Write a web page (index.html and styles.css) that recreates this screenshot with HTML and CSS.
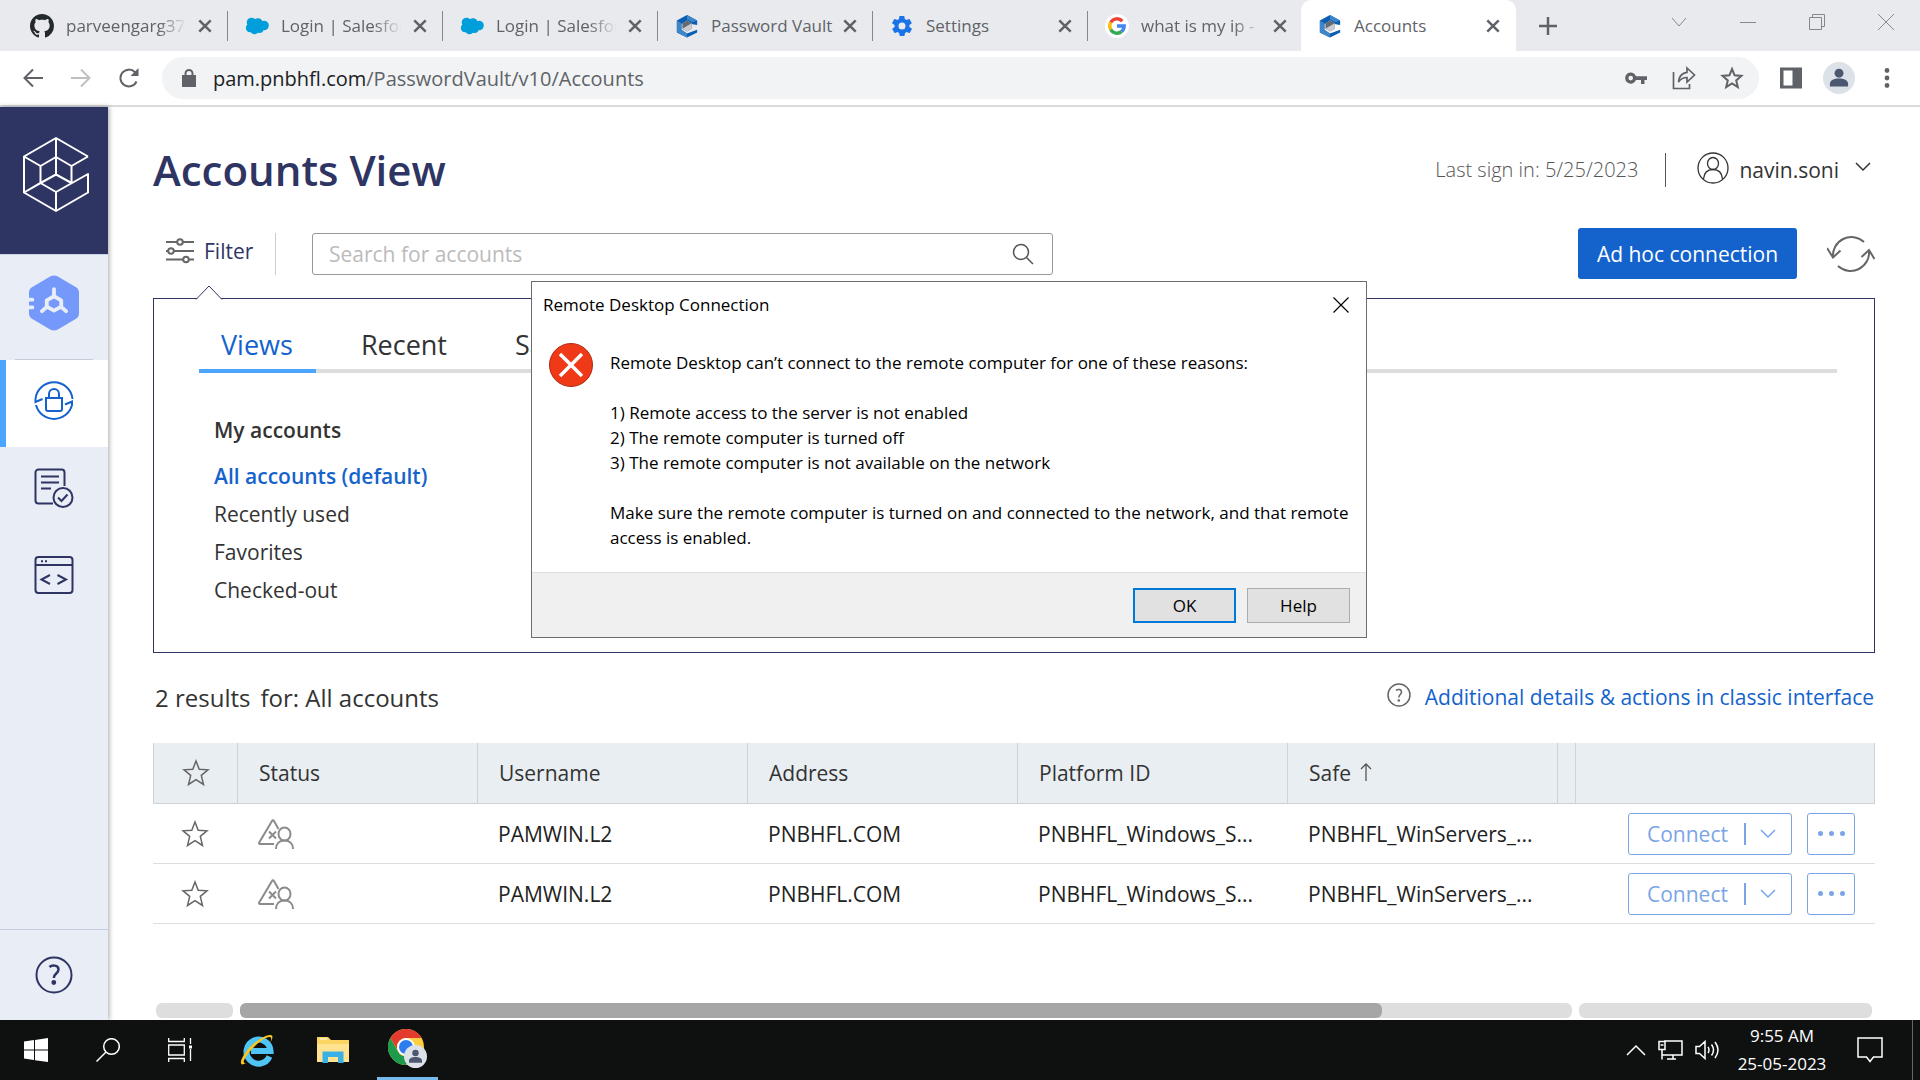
FILE: index.html
```html
<!DOCTYPE html>
<html lang="en">
<head>
<meta charset="utf-8">
<title>Accounts</title>
<link rel="stylesheet" href="styles.css">
</head>
<body>
<svg class="defs" aria-hidden="true">
  <symbol id="x" viewBox="0 0 14 14"><path d="M2 2l10 10M12 2L2 12" fill="none" stroke="#5f6368" stroke-width="2.2"/></symbol>
  <symbol id="cloud" viewBox="0 0 24 24"><g fill="#009edb"><circle cx="6.500" cy="8.500" r="4.800"/><circle cx="13" cy="8.800" r="4.600"/><circle cx="19" cy="11.500" r="4.800"/><circle cx="5" cy="14" r="4.200"/><circle cx="9.500" cy="16" r="4.300"/><circle cx="14.500" cy="15" r="4"/></g></symbol>
  <symbol id="vault" viewBox="0 0 24 26"><path d="M12 1l11 6v5l-5-1-6-4-6 4v6l6 4 11-4v3l-11 5.500L1 20V7z" fill="#0a5fb4"/><path d="M1 7l5 3v7l6 4v4.500L1 20zM12 1l11 6-5 2-6-3z" fill="#3f86c9"/><path d="M12 7l5 3v6l-5 3-5-3v-6z" fill="#666b73"/><path d="M12 13l5-3v6l-5 3-5-3z" fill="#c9ccd1"/></symbol>
  <symbol id="star" viewBox="0 0 28 28"><path d="M14 2l3.200 8.200 8.800.6-6.700 5.600 2.200 9.100L14 20.700l-7.500 4.800 2.200-9.100L2 10.800l8.800-.6z" fill="none" stroke="#666" stroke-width="1.500"/></symbol>
  <symbol id="warn" viewBox="0 0 36 30"><path d="M16 25H2c-.8 0-1.200-.7-.8-1.500L14 2c.5-1 1.500-1 2 0l4.500 8M11 12.500l7 7M18 12.500l-7 7" fill="none" stroke="#8b8b8b" stroke-width="2"/><ellipse cx="26.500" cy="15" rx="6" ry="6.500" fill="none" stroke="#8b8b8b" stroke-width="2"/><path d="M18 30c0-5.500 3.500-8.500 8.500-8.500S35 24.500 35 30" fill="none" stroke="#8b8b8b" stroke-width="2"/></symbol>
  <symbol id="down" viewBox="0 0 16 10"><path d="M1 1l7 7 7-7" fill="none" stroke="currentColor" stroke-width="1.500"/></symbol>
  <symbol id="person" viewBox="0 0 30 30"><circle cx="15" cy="15" r="15" fill="#dde1e8"/><circle cx="15" cy="10.500" r="4.200" fill="#4b5870"/><path d="M6.500 23v-2.500c0-3.500 4-5 8.500-5s8.500 1.500 8.500 5V23z" fill="#4b5870"/></symbol>
</svg>

<header class="browser">
  <div class="tabstrip">
    <div class="tab"><svg class="fav" viewBox="0 0 16 16"><path fill="#24292e" d="M8 0C3.580 0 0 3.580 0 8c0 3.540 2.290 6.530 5.470 7.590.4.070.55-.17.55-.38 0-.19-.01-.82-.01-1.490-2.010.37-2.530-.49-2.690-.94-.09-.23-.48-.94-.82-1.130-.28-.15-.68-.52-.01-.53.63-.01 1.080.58 1.230.82.72 1.210 1.870.87 2.330.66.070-.52.280-.87.510-1.070-1.780-.2-3.640-.89-3.640-3.950 0-.87.310-1.590.82-2.150-.08-.2-.36-1.020.080-2.120 0 0 .67-.21 2.200.82.640-.18 1.320-.27 2-.27s1.360.09 2 .27c1.530-1.040 2.200-.82 2.200-.82.440 1.100.160 1.920.080 2.120.51.560.82 1.270.82 2.150 0 3.070-1.870 3.750-3.650 3.950.29.250.54.730.54 1.480 0 1.070-.01 1.930-.01 2.200 0 .21.150.46.550.38A8.010 8.010 0 0 0 16 8c0-4.420-3.580-8-8-8z"/></svg><span class="tab-title fade">parveengarg37</span><button class="tab-close" aria-label="Close tab"><svg><use href="#x"/></svg></button></div>
    <div class="tab"><svg class="fav"><use href="#cloud"/></svg><span class="tab-title fade">Login | Salesforce</span><button class="tab-close" aria-label="Close tab"><svg><use href="#x"/></svg></button></div>
    <div class="tab"><svg class="fav"><use href="#cloud"/></svg><span class="tab-title fade">Login | Salesforce</span><button class="tab-close" aria-label="Close tab"><svg><use href="#x"/></svg></button></div>
    <div class="tab"><svg class="fav"><use href="#vault"/></svg><span class="tab-title">Password Vault</span><button class="tab-close" aria-label="Close tab"><svg><use href="#x"/></svg></button></div>
    <div class="tab"><svg class="fav" viewBox="0 0 24 24"><path fill="#1a73e8" d="M19.400 13a7.500 7.500 0 0 0 0-2l2.100-1.600c.2-.2.300-.4.100-.7l-2-3.400c-.1-.2-.4-.3-.6-.2l-2.500 1a7.300 7.300 0 0 0-1.700-1l-.4-2.600c0-.3-.2-.5-.5-.5h-4c-.2 0-.4.200-.5.400l-.4 2.700c-.6.200-1.200.6-1.700 1l-2.500-1c-.2-.1-.5 0-.6.200l-2 3.400c-.1.300 0 .5.100.7L4.600 11a8 8 0 0 0 0 2l-2.100 1.600c-.2.200-.3.400-.1.700l2 3.400c.1.200.4.300.6.200l2.500-1c.5.400 1.100.7 1.700 1l.4 2.600c0 .3.200.5.500.5h4c.2 0 .4-.2.500-.4l.4-2.700c.6-.2 1.200-.6 1.700-1l2.500 1c.2.100.5 0 .6-.2l2-3.400c.1-.3 0-.5-.1-.7zM12 15.500a3.500 3.500 0 1 1 0-7 3.500 3.500 0 0 1 0 7z"/></svg><span class="tab-title">Settings</span><button class="tab-close" aria-label="Close tab"><svg><use href="#x"/></svg></button></div>
    <div class="tab"><svg class="fav" viewBox="0 0 24 24"><circle cx="12" cy="12" r="12" fill="#fff"/><g fill="none" stroke-width="3.400"><path d="M17.300 7.100A7.200 7.200 0 0 0 5.700 8.500" stroke="#ea4335"/><path d="M5.700 8.500a7.200 7.200 0 0 0 0 7" stroke="#fbbc05"/><path d="M5.700 15.500a7.200 7.200 0 0 0 11 1.900" stroke="#34a853"/><path d="M16.600 17.500a7.200 7.200 0 0 0 2.600-5.500H12" stroke="#4285f4"/></g></svg><span class="tab-title fade">what is my ip -</span><button class="tab-close" aria-label="Close tab"><svg><use href="#x"/></svg></button></div>
    <div class="tab active"><svg class="fav"><use href="#vault"/></svg><span class="tab-title">Accounts</span><button class="tab-close" aria-label="Close tab"><svg><use href="#x"/></svg></button></div>
    <button class="new-tab" aria-label="New tab"><svg width="20" height="20" viewBox="0 0 20 20"><path d="M10 1v18M1 10h18" stroke="#5f6368" stroke-width="2.500"/></svg></button>
    <div class="window-buttons">
      <button aria-label="Search tabs"><svg viewBox="0 0 16 16"><path d="M1 4l7 8 7-8"/></svg></button>
      <button aria-label="Minimize"><svg viewBox="0 0 16 16"><path d="M0 8.500h16"/></svg></button>
      <button aria-label="Restore"><svg viewBox="0 0 16 16"><path d="M.5 3.500h12v12H.5zM3.500 3.500v-3h12v12h-3"/></svg></button>
      <button aria-label="Close"><svg viewBox="0 0 16 16"><path d="M0 0l16 16M16 0L0 16"/></svg></button>
    </div>
  </div>
  <div class="toolbar">
    <button aria-label="Back"><svg viewBox="0 0 20 20"><path d="M20 10H2M10 1.500L1.500 10l8.500 8.500"/></svg></button>
    <button class="off" aria-label="Forward"><svg viewBox="0 0 20 20"><path d="M0 10h18M10 1.500l8.500 8.500-8.500 8.500"/></svg></button>
    <button aria-label="Reload"><svg viewBox="0 0 20 20"><path d="M17.500 13.500A8.400 8.400 0 1 1 16 4.300l2 2"/><path d="M19.500 0v8h-8z" fill="#5f6368" stroke="none"/></svg></button>
    <div class="omnibox">
      <svg class="lock" viewBox="0 0 14 18"><path d="M1 7h12v10H1z" fill="#5f6368"/><path d="M3.500 8V4.500a3.500 3.500 0 0 1 7 0V8" fill="none" stroke="#5f6368" stroke-width="2"/></svg>
      <div class="url">pam.pnbhfl.com<span>/PasswordVault/v10/Accounts</span></div>
      <button aria-label="Saved passwords"><svg viewBox="0 0 24 24"><path d="M12 10.200A5.600 5.600 0 1 0 12 14h5v4h3.500v-4H23v-3.800zM6.700 14.400a2.300 2.300 0 1 1 0-4.600 2.300 2.300 0 0 1 0 4.600z" fill="#5f6368" stroke="none"/></svg></button>
      <button aria-label="Share"><svg viewBox="0 0 24 24"><path d="M1.500 6v16.500h16V18M15 2l7.500 7-7.500 7v-4.500c-4 0-6.500 1.500-8.500 4.500.5-5.500 3.500-9 8.500-9.700z" stroke-width="1.700"/></svg></button>
      <button aria-label="Bookmark"><svg viewBox="0 0 24 24"><path d="M12 3l2.600 6.300 6.800.6-5.200 4.500 1.600 6.600-5.800-3.600L6.200 21l1.600-6.600-5.200-4.500 6.800-.6z" stroke-width="2"/></svg></button>
    </div>
    <button class="after" aria-label="Side panel"><svg viewBox="0 0 24 24"><path d="M1 1.500h22v21H1zM4.500 4.500v15h9v-15z" fill="#5f6368" fill-rule="evenodd" stroke="none"/></svg></button>
    <button class="avatar" aria-label="Profile"><svg><use href="#person"/></svg></button>
    <button aria-label="Menu"><svg viewBox="0 0 20 20"><g fill="#5f6368" stroke="none"><circle cx="10" cy="2.500" r="2.400"/><circle cx="10" cy="10" r="2.400"/><circle cx="10" cy="17.500" r="2.400"/></g></svg></button>
  </div>
</header>

<div class="app">
  <nav class="sidebar">
    <a class="logo" href="#" aria-label="Home"><svg viewBox="0 0 68 78" fill="none" stroke="#fff" stroke-width="2" stroke-linejoin="round"><path d="M66 20.500L34 2 2 20.500v36L34 75l32-18.500V38L34 56 18.500 47V30L34 21l15.500 9v17L34 38.500 18.500 47 2 56.500M34 2v36M2 20.500L18.500 30M66 20.500L49.500 30M34 56v19"/></svg></a>
    <a class="item hub" href="#" aria-label="Services"><svg viewBox="0 0 52 58"><path d="M22 1.500a8 8 0 0 1 8 0l18 10.500a7 7 0 0 1 4 6.500v21a7 7 0 0 1-4 6.500L30 56.500a8 8 0 0 1-8 0L4 46a7 7 0 0 1-4-6.500v-21A7 7 0 0 1 4 12z" fill="#7599fa"/><g fill="none" stroke="#e8edf6" stroke-width="4" stroke-linecap="round" stroke-linejoin="round"><path d="M26 14.500v7.500l-7.500 4.200v6.600L26 37l7.500-4.200v-6.600L26 22M18.500 33l-5 4.500M33.500 33l5 4.500M-3 25.500h6.500M-3 33.500h6.500"/></g></svg></a>
    <a class="item current" href="#" aria-label="Accounts"><svg viewBox="0 0 40 40" fill="none" stroke="#1463cd" stroke-width="2"><path d="M38.500 18A18.600 18.600 0 0 0 1.500 18v3l7-3M2 24a18.600 18.600 0 0 0 36 0v-3.500L31 23.500M12 17h16v11a2 2 0 0 1-2 2H14a2 2 0 0 1-2-2zM15 16.500V13a5 5 0 0 1 10 0v3.500"/></svg></a>
    <a class="item" href="#" aria-label="Reports"><svg viewBox="0 0 40 40" fill="none" stroke="#2f3563" stroke-width="2"><path d="M19 35.500H4.500a3 3 0 0 1-3-3v-28a3 3 0 0 1 3-3h23a3 3 0 0 1 3 3V18M7 8.500h18M7 14.500h18M7 20.500h10"/><circle cx="29" cy="29.500" r="9.500"/><path d="M24 29.500l3.500 3.500 6-6.500"/></svg></a>
    <a class="item" href="#" aria-label="Applications"><svg viewBox="0 0 40 40" fill="none" stroke="#2f3563" stroke-width="2"><rect x="1.500" y="2" width="37" height="36" rx="3"/><path d="M1.500 10h37M16 20l-8.500 4.500L16 29M23.500 20l8.500 4.500-8.500 4.500M7 6.300h2M11 6.300h2"/></svg></a>
    <a class="item help" href="#" aria-label="Help"><svg viewBox="0 0 40 40" fill="none" stroke="#2f3563" stroke-width="2"><circle cx="20" cy="20" r="17.500"/><path d="M15.500 12c2-2 9-2.500 9 2.500 0 4-4.700 4-4.700 8.500" stroke-width="2.500"/><circle cx="19.800" cy="27.500" r="1.400" fill="#2f3563"/></svg></a>
  </nav>

  <main class="main">
    <div class="page-head">
      <h1>Accounts View</h1>
      <span class="signin">Last sign in: 5/25/2023</span>
      <button class="user"><svg class="user-icon" viewBox="0 0 32 32" fill="none" stroke="#333" stroke-width="1.300"><circle cx="16" cy="16" r="15"/><ellipse cx="16" cy="11.500" rx="5.500" ry="6"/><path d="M6.500 27c.5-6 4-9.500 9.500-9.500s9 3.500 9.500 9.500"/></svg><span>navin.soni</span><svg class="chev"><use href="#down"/></svg></button>
    </div>

    <div class="tools">
      <button class="filter"><svg viewBox="0 0 28 26" fill="#fff" stroke="#666" stroke-width="2"><path d="M0 4h28M0 13h28M0 21.500h28"/><circle cx="14" cy="4" r="2.800"/><circle cx="5" cy="13" r="2.800"/><circle cx="20" cy="21.500" r="2.800"/></svg><span>Filter</span></button>
      <div class="search"><input type="search" placeholder="Search for accounts" aria-label="Search for accounts"><svg viewBox="0 0 22 22" fill="none" stroke="#555" stroke-width="1.500"><circle cx="9" cy="9" r="7.500"/><path d="M14.500 14.500L21 21"/></svg></div>
      <button class="adhoc">Ad hoc connection</button>
      <button class="refresh" aria-label="Refresh"><svg viewBox="0 0 48 40" fill="none" stroke="#666" stroke-width="2"><path d="M37 8A18.500 18.500 0 0 0 6 23.500M0 14l6 9.500 7.500-7M11 32a18.500 18.500 0 0 0 31-15.500M34.500 23l7.500-7 5.500 9"/></svg></button>
    </div>

    <section class="panel">
      <svg class="notch" viewBox="0 0 28 15"><path d="M1 14.500L14 1l13 13.500" fill="#fff" stroke="#2f3563"/></svg>
      <div class="panel-tabs">
        <a class="on" href="#">Views</a><a href="#">Recent</a><a href="#">Saved</a>
      </div>
      <h2>My accounts</h2>
      <ul>
        <li><a class="on" href="#">All accounts (default)</a></li>
        <li><a href="#">Recently used</a></li>
        <li><a href="#">Favorites</a></li>
        <li><a href="#">Checked-out</a></li>
      </ul>
    </section>

    <div class="results">
      <p><span>2 results</span><span>for: All accounts</span></p>
      <a href="#"><svg viewBox="0 0 24 24" fill="none" stroke="#666" stroke-width="1.500"><circle cx="12" cy="12" r="11"/><path d="M9 7.500c1.500-1.500 5.500-1.500 5.500 1.500 0 2.500-2.700 2.700-2.700 5.500"/><circle cx="11.800" cy="17.500" r=".6"/></svg>Additional details &amp; actions in classic interface</a>
    </div>

    <table>
      <colgroup><col class="c-star"><col class="c-status"><col class="c-text"><col class="c-text"><col class="c-text"><col class="c-text"><col class="c-gap"><col></colgroup>
      <thead><tr><th class="star-cell"><svg><use href="#star"/></svg></th><th>Status</th><th>Username</th><th>Address</th><th>Platform ID</th><th>Safe<svg class="sort" viewBox="0 0 12 18"><path d="M6 18V1M1 6l5-5 5 5" fill="none" stroke="#555" stroke-width="1.300"/></svg></th><th></th><th></th></tr></thead>
      <tbody>
        <tr><td class="star-cell"><svg><use href="#star"/></svg></td><td><svg class="warn"><use href="#warn"/></svg></td><td>PAMWIN.L2</td><td>PNBHFL.COM</td><td>PNBHFL_Windows_S...</td><td>PNBHFL_WinServers_...</td><td></td><td><div class="actions"><button class="connect"><span>Connect</span><svg><use href="#down"/></svg></button><button class="more" aria-label="More actions"><i></i><i></i><i></i></button></div></td></tr>
        <tr><td class="star-cell"><svg><use href="#star"/></svg></td><td><svg class="warn"><use href="#warn"/></svg></td><td>PAMWIN.L2</td><td>PNBHFL.COM</td><td>PNBHFL_Windows_S...</td><td>PNBHFL_WinServers_...</td><td></td><td><div class="actions"><button class="connect"><span>Connect</span><svg><use href="#down"/></svg></button><button class="more" aria-label="More actions"><i></i><i></i><i></i></button></div></td></tr>
      </tbody>
    </table>

    <div class="scrollbars"><div class="track s1"></div><div class="track s2"><div class="thumb"></div></div><div class="track s3"></div></div>
  </main>
</div>

<footer class="taskbar">
  <button class="task" aria-label="Start"><svg width="24" height="24" viewBox="0 0 24 24"><path d="M0 3.500l10-1.400v9.400H0zM11 2l13-2v11.500H11zM0 12.500h10V22L0 20.600zM11 12.500h13V24l-13-1.800z" fill="#fff"/></svg></button>
  <button class="task" aria-label="Search"><svg width="24" height="24" viewBox="0 0 24 24" fill="none" stroke="#fff" stroke-width="1.500"><circle cx="15.500" cy="8.500" r="7.800"/><path d="M10 14L.5 23.500"/></svg></button>
  <button class="task" aria-label="Task view"><svg width="24" height="24" viewBox="0 0 24 24" fill="none" stroke="#fff" stroke-width="1.300"><path d="M.7 0v3.500h15.600V0M.7 7h15.600v10H.7zM.7 24v-3.500h15.600V24M22.500 0v6M22.500 11v12"/><path d="M21 7.500h3v3h-3z" fill="#fff" stroke="none"/></svg></button>
  <button class="task" aria-label="Internet Explorer"><svg width="36" height="36" viewBox="0 0 36 36" fill="none"><path d="M30.500 24.500A12 12 0 1 1 31.500 19H12" stroke="#50c4f5" stroke-width="6"/><path d="M7 31c-10 6-4-9 6-18S36-1 33 7c-.5 1.500-1 2.500-2 4 5-11-7-5-15 3S1 32 7 31z" fill="#f9c623"/></svg></button>
  <button class="task" aria-label="File Explorer"><svg width="32" height="28" viewBox="0 0 32 28"><path d="M0 1h11l3 3h18v22H0z" fill="#fcd462"/><path d="M0 8h32v18H0z" fill="#ffe391"/><path d="M5.500 27V15.500h21V27H21v-6h-10v6z" fill="#3ab1e6"/><path d="M3 3h7" stroke="#fff"/></svg></button>
  <button class="task running" aria-label="Google Chrome"><svg width="40" height="40" viewBox="0 0 40 40"><circle cx="18" cy="18" r="18" fill="#ffcd40"/><path d="M2.400 9A18 18 0 0 1 33.600 9H18a9 9 0 0 0-8.500 12z" fill="#e33b2e"/><path d="M2.400 9A18 18 0 0 0 18 36l8-13.500a9 9 0 0 1-16 0z" fill="#1d9a4c"/><circle cx="18" cy="18" r="9" fill="#fff"/><circle cx="18" cy="18" r="7" fill="#2d7ded"/><use href="#person" x="16" y="16" width="23" height="23"/></svg></button>
  <div class="tray">
    <svg width="20" height="12" viewBox="0 0 20 12"><path d="M1 11l9-9 9 9"/></svg>
    <svg width="25" height="20" viewBox="0 0 25 20"><path d="M6 1h18v14H4.500M4 10v9.500M1 1.500h6v8H1zM15 15v4M9 19h9M2.500 5h3"/></svg>
    <svg width="24" height="20" viewBox="0 0 24 20"><path d="M1 6.500h3.500L10 1.500v17l-5.500-5H1zM13 7q2 3 0 6M16.500 4.500q4 5.500 0 11M20 2q6 8 0 16"/></svg>
    <div class="clock">9:55 AM<br>25-05-2023</div>
    <svg class="note" width="26" height="26" viewBox="0 0 26 26"><path d="M1 1h24v19h-8.500L13 24.500 9.500 20H1z"/></svg>
  </div>
</footer>

<div class="dialog" role="dialog" aria-labelledby="dlg-title">
  <div class="dialog-title"><span id="dlg-title">Remote Desktop Connection</span><button aria-label="Close dialog"><svg width="16" height="16" viewBox="0 0 16 16"><path d="M.5.5l15 15M15.500.5l-15 15" stroke="#000" stroke-width="1.200"/></svg></button></div>
  <div class="dialog-body">
    <svg width="44" height="44" viewBox="0 0 44 44"><circle cx="22" cy="22" r="21.500" fill="#f03a17" stroke="#b02a12"/><path d="M11 11l22 22M33 11L11 33" stroke="#fff" stroke-width="3.500"/></svg>
    <div>
      <p>Remote Desktop can’t connect to the remote computer for one of these reasons:</p>
      <p>1) Remote access to the server is not enabled<br>2) The remote computer is turned off<br>3) The remote computer is not available on the network</p>
      <p>Make sure the remote computer is turned on and connected to the network, and that remote<br>access is enabled.</p>
    </div>
  </div>
  <div class="dialog-foot"><button class="default">OK</button><button>Help</button></div>
</div>
</body>
</html>
```
FILE: styles.css
```css
* { box-sizing: border-box; }
:root {
  --web: "Open Sans", sans-serif;
  --system: "Open Sans", "Noto Sans", sans-serif;
  --navy: #2f3563;
  --blue: #1463cd;
}
body { margin: 0; min-height: 100vh; display: flex; flex-direction: column; font: 21px/28px var(--web); color: #333; background: #fff; position: relative; overflow-x: hidden; }
button { font: inherit; color: inherit; background: none; border: 0; padding: 0; margin: 0; display: flex; align-items: center; justify-content: center; }
a { color: inherit; text-decoration: none; }
h1, h2, p, ul { margin: 0; padding: 0; }
svg { display: block; flex: none; }
.defs { position: absolute; width: 0; height: 0; }

/* Browser frame */
.browser { font-family: var(--system); color: #5f6368; }
.tabstrip { height: 51px; background: #e8eaed; display: flex; padding-left: 13px; font-size: 17px; }
.tab { width: 215px; display: flex; align-items: center; padding: 0 15px 0 17px; background: linear-gradient(#85888d, #85888d) right center / 1px 30px no-repeat; }
.tab:nth-child(6) { background: none; }
.tab.active { background: #fff; border-radius: 10px 10px 0 0; margin-left: -2px; }
.fav { width: 24px; height: 24px; margin-right: 12px; }
.tab-title { flex: 1; white-space: nowrap; overflow: hidden; }
.fade { -webkit-mask-image: linear-gradient(90deg, #000 75%, transparent 98%); mask-image: linear-gradient(90deg, #000 75%, transparent 98%); }
.tab-close { margin-left: 8px; width: 16px; height: 24px; }
.tab-close svg { width: 16px; height: 16px; }
.new-tab { width: 64px; }
.window-buttons { margin-left: auto; display: flex; height: 43px; }
.window-buttons button { width: 69px; }
.window-buttons svg { width: 16px; height: 16px; fill: none; stroke: #85888d; }
.toolbar { height: 56px; border-bottom: 2px solid #dadbdc; display: flex; align-items: center; padding: 0 9px 0 9px; }
.toolbar button { width: 48px; height: 42px; }
.toolbar svg { width: 20px; height: 20px; fill: none; stroke: #5f6368; stroke-width: 2; }
.toolbar .off { opacity: .4; }
.omnibox { flex: 1; height: 42px; margin-left: 9px; border-radius: 21px; background: #f1f3f4; display: flex; align-items: center; padding: 0 3px 0 20px; color: #202124; font-size: 20px; }
.omnibox .lock { width: 14px; height: 18px; }
.omnibox button svg, .toolbar .after svg { width: 24px; height: 24px; }
.url { flex: 1; margin-left: 17px; padding-top: 1px; }
.url span { color: #5f6368; }
.toolbar .after { margin-left: 8px; }
.toolbar .avatar svg { width: 32px; height: 32px; stroke: none; }

/* Application */
.app { flex: 1; display: flex; }
.sidebar { width: 108px; flex: none; background: #e8edf6; box-shadow: 1px 0 5px rgba(0, 0, 0, .35); display: flex; flex-direction: column; }
.logo { height: 147px; background: var(--navy); padding: 29px 22px 0; }
.logo svg { width: 68px; height: 78px; }
.item { height: 87px; padding-bottom: 5px; display: flex; align-items: center; justify-content: center; }
.item svg { width: 40px; height: 40px; }
.hub { height: 106px; padding-bottom: 10px; border-top: 1px solid #c8d2e6; background: linear-gradient(#c9ccd6, #c9ccd6) center bottom / 78px 1px no-repeat; }
.item.hub svg { width: 50px; height: 56px; }
.current { background: #fff; border-left: 6px solid #4ba5ff; padding-right: 6px; }
.help { height: 91px; padding-bottom: 0; margin-top: auto; border-top: 1px solid #c5cce2; }

.main { flex: 1; min-width: 0; padding: 0 45px; display: flex; flex-direction: column; }
.page-head { height: 121px; padding: 5px 4px 0 0; display: flex; align-items: center; }
h1 { font-size: 42px; line-height: 56px; font-weight: 600; color: var(--navy); flex: 1; }
.signin { color: #555; padding-right: 27px; font-size: 20px; font-weight: 300; }
.user { border-left: 1px solid #555; padding-left: 31px; height: 34px; }
.user-icon { width: 32px; height: 32px; margin: 0 10px 4px 0; }
.chev { width: 16px; height: 10px; margin-left: 16px; margin-bottom: 6px; }

.tools { height: 51px; display: flex; align-items: center; }
.filter { height: 42px; width: 123px; padding: 0 0 5px 13px; justify-content: flex-start; border-right: 1px solid #ccc; color: var(--navy); }
.filter svg { width: 28px; height: 26px; margin-right: 10px; }
.search { width: 741px; height: 42px; margin-left: 36px; border: 1px solid #999; border-radius: 3px; display: flex; align-items: center; padding: 0 18px 0 16px; }
.search input { flex: 1; border: 0; outline: 0; padding: 0; font: inherit; background: none; }
.search input::placeholder { color: #bbb; }
.search svg { width: 22px; height: 22px; }
.adhoc { margin-left: auto; width: 219px; height: 51px; background: var(--blue); color: #fff; border-radius: 3px; font-weight: 500; }
.refresh { margin-left: 30px; }
.refresh svg { width: 48px; height: 40px; }

.panel { position: relative; margin-top: 19px; border: 1px solid var(--navy); padding: 21px 37px 43px 45px; }
.notch { position: absolute; left: 41px; top: -14px; width: 28px; height: 15px; }
.panel-tabs { display: flex; border-bottom: 4px solid #dcdddd; font-size: 27px; line-height: 49px; }
.panel-tabs a { padding: 0 23px 0 22px; margin-bottom: -4px; margin-right: 23px; border-bottom: 4px solid transparent; }
.panel-tabs .on { color: var(--blue); border-color: #4ba5ff; }
h2 { font-size: 21px; line-height: 38px; font-weight: 600; margin: 38px 0 8px 15px; }
.panel ul { list-style: none; margin-left: 15px; line-height: 38px; }
.panel li .on { color: var(--blue); font-weight: 600; }

.results { height: 90px; display: flex; justify-content: space-between; align-items: center; }
.results p { font-size: 24px; display: flex; gap: 10px; padding-left: 2px; }
.results a { display: flex; align-items: center; color: var(--blue); margin: 0 1px 2px 0; }
.results svg { width: 24px; height: 24px; margin: 0 14px 4px 0; }

table { width: 100%; table-layout: fixed; border-collapse: separate; border-spacing: 0; }
.c-star { width: 84px; }
.c-status { width: 240px; }
.c-text { width: 270px; }
.c-gap { width: 18px; }
th, td { padding: 0 0 0 21px; text-align: left; white-space: nowrap; font-weight: 400; }
th { height: 61px; background: #e9eef2; border-left: 1px solid #ced2d4; border-bottom: 1px solid #ced2d4; }
th:last-child { border-right: 1px solid #ced2d4; }
td { height: 60px; color: #222; border-bottom: 1px solid #dedede; }
th:nth-child(7), td:nth-child(7) { padding: 0; }
.star-cell { padding-left: 28px; }
.star-cell svg { width: 28px; height: 28px; }
.warn { width: 36px; height: 30px; }
.sort { display: inline-block; width: 12px; height: 18px; margin-left: 9px; }
.actions { display: flex; justify-content: flex-end; gap: 15px; padding-right: 20px; color: #7ba5e6; }
.connect, .more { height: 42px; border: 1px solid #7ba5e6; border-radius: 3px; }
.connect { width: 164px; justify-content: flex-start; padding-left: 18px; }
.connect span { flex: 1; text-align: left; background: linear-gradient(#7ba5e6, #7ba5e6) right center / 2px 22px no-repeat; }
.connect svg { width: 16px; height: 10px; margin: 0 15px 0 14px; }
.more { width: 48px; gap: 6px; }
.more i { width: 5px; height: 5px; border-radius: 50%; background: #7ba5e6; }

.scrollbars { margin-top: auto; height: 20px; display: flex; align-items: center; padding: 0 3px; gap: 7px; }
.track { height: 15px; background: #dedede; border-radius: 6px; }
.s1 { width: 77px; }
.s2 { flex: 1; }
.s3 { width: 293px; }
.thumb { width: 85.7%; height: 100%; background: #a6a6a6; border-radius: 6px; }

/* Taskbar */
.taskbar { height: 60px; background: #0f1111; color: #fff; font: 17px/28px var(--system); display: flex; }
.task { width: 72px; height: 60px; }
.task:nth-child(4) { width: 82px; }
.task:nth-child(5) { width: 70px; }
.running { width: 61px; margin-left: 9px; border-bottom: 3px solid #76b9ed; }
.tray { margin-left: auto; display: flex; align-items: center; gap: 12px; padding-right: 29px; border-right: 1px solid #666; margin-right: 7px; }
.tray svg { fill: none; stroke: #fff; stroke-width: 1.5; }
.clock { text-align: center; width: 98px; margin-left: 2px; }
.tray .note { margin-left: 14px; }

/* Message window */
.dialog { position: absolute; left: 531px; top: 281px; width: 836px; background: #fff; border: 1px solid #6d6d6d; color: #000; font: 17px/25px var(--system); }
.dialog-title { height: 45px; display: flex; justify-content: space-between; align-items: center; padding: 0 17px 0 11px; }
.dialog-body { display: flex; padding: 16px 16px 15px 17px; gap: 17px; min-height: 245px; }
.dialog-body p { margin-bottom: 25px; white-space: nowrap; margin-top: 0; }
.dialog-body div { padding-top: 7px; }
.dialog-body p:last-child { margin-bottom: 0; }
.dialog-foot { height: 65px; background: #f0f0f0; border-top: 1px solid #dfdfdf; display: flex; justify-content: flex-end; align-items: center; gap: 11px; padding-right: 16px; }
.dialog-foot button { width: 103px; height: 35px; background: #e1e1e1; border: 1px solid #adadad; }
.dialog-foot .default { border: 2px solid #0078d7; }
```
